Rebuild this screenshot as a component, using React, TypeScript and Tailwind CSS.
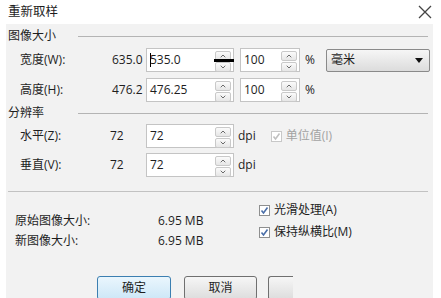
import { ChevronDown, ChevronUp } from 'lucide-react'

const font = { fontFamily: '"Segoe UI", "Open Sans", "Noto Sans CJK SC", sans-serif' }

function Spinner({ mark }: { mark?: boolean }) {
  return (
    <div className="relative flex h-full w-[18px] flex-col gap-[1px] py-[2px] pr-[2px]">
      <div className="flex flex-1 items-center justify-center rounded-[2px] border border-[#c9c9c9] bg-gradient-to-b from-[#fbfbfb] to-[#e6e6e6]">
        <ChevronUp size={8} strokeWidth={3} className="text-[#6a6a6a]" />
      </div>
      <div className="flex flex-1 items-center justify-center rounded-[2px] border border-[#c9c9c9] bg-gradient-to-b from-[#fbfbfb] to-[#e6e6e6]">
        <ChevronDown size={8} strokeWidth={3} className="text-[#6a6a6a]" />
      </div>
      {mark && <div className="absolute top-[10px] left-[-1px] h-[3px] w-[20px] bg-black" />}
    </div>
  )
}

function NumBox({ value, w, cursor, mark }: { value: string; w: string; cursor?: boolean; mark?: boolean }) {
  return (
    <div className={`flex h-[24px] items-stretch border border-[#c4c4c4] bg-white ${w}`}>
      <div className="flex flex-1 items-center pl-[3px]">
        {cursor && <span className="mr-[-1px] h-[14px] w-[1px] bg-black" />}
        <span>{value}</span>
      </div>
      <Spinner mark={mark} />
    </div>
  )
}

function Check({ label, disabled }: { label: string; disabled?: boolean }) {
  return (
    <div className={`flex items-center gap-[4px] ${disabled ? 'text-[#a3a3a3]' : ''}`}>
      <span
        className={`flex h-[11px] w-[11px] items-center justify-center border bg-white ${
          disabled ? 'border-[#c8c8c8]' : 'border-[#8e8f8f]'
        }`}
      >
        <svg width="9" height="9" viewBox="0 0 9 9">
          <path
            d="M1.5 4.5 L3.5 7 L7.5 1.5"
            fill="none"
            stroke={disabled ? '#c0c0c0' : '#4a6ea8'}
            strokeWidth="1.6"
          />
        </svg>
      </span>
      <span>{label}</span>
    </div>
  )
}

function GroupHead({ title }: { title: string }) {
  return (
    <div className="flex h-[22px] items-center">
      <span className="w-[72px] pl-[2px]">{title}</span>
      <div className="mr-[5px] h-[1px] flex-1 bg-[#b4b4b4]" />
    </div>
  )
}

export default function App() {
  return (
    <div
      className="flex h-[298px] w-[441px] flex-col overflow-hidden bg-white text-[12px] leading-[16px] text-[#1e1e1e]"
      style={font}
    >
      <div className="flex h-[24px] shrink-0 items-center justify-between pr-[9px] pl-[8px]">
        <span className="text-[12.5px]">重新取样</span>
        <svg width="14" height="14" viewBox="0 0 14 14">
          <path d="M1 1 L13 13 M13 1 L1 13" stroke="#444" strokeWidth="1.3" />
        </svg>
      </div>

      <div className="ml-[6px] w-[427px] flex-1 bg-[#f2f2f2]">
        <div className="pt-[1px]">
          <GroupHead title="图像大小" />
        </div>

        <div className="mt-[1px] flex h-[24px] items-center">
          <span className="w-[106px] pl-[14px]">宽度(W):</span>
          <span className="w-[34px]">635.0</span>
          <NumBox value="535.0" w="w-[88px]" cursor mark />
          <div className="ml-[6px]">
            <NumBox value="100" w="w-[60px]" />
          </div>
          <span className="ml-[5px]">%</span>
          <div className="ml-[11px] flex h-[23px] w-[104px] items-center justify-between rounded-[2px] border border-[#8a8a8a] bg-gradient-to-b from-[#f6f6f6] to-[#dcdcdc] pr-[6px] pl-[4px]">
            <span>毫米</span>
            <svg width="8" height="5" viewBox="0 0 8 5">
              <path d="M0 0 L8 0 L4 5 Z" fill="#111" />
            </svg>
          </div>
        </div>

        <div className="mt-[6px] flex h-[24px] items-center">
          <span className="w-[106px] pl-[14px]">高度(H):</span>
          <span className="w-[34px]">476.2</span>
          <NumBox value="476.25" w="w-[88px]" />
          <div className="ml-[6px]">
            <NumBox value="100" w="w-[60px]" />
          </div>
          <span className="ml-[5px]">%</span>
        </div>

        <GroupHead title="分辨率" />

        <div className="flex h-[24px] items-center">
          <span className="w-[104px] pl-[14px]">水平(Z):</span>
          <span className="w-[36px]">72</span>
          <NumBox value="72" w="w-[88px]" />
          <span className="ml-[4px]">dpi</span>
          <div className="ml-[15px]">
            <Check label="单位值(I)" disabled />
          </div>
        </div>

        <div className="mt-[5px] flex h-[24px] items-center">
          <span className="w-[104px] pl-[14px]">垂直(V):</span>
          <span className="w-[36px]">72</span>
          <NumBox value="72" w="w-[88px]" />
          <span className="ml-[4px]">dpi</span>
        </div>

        <div className="mt-[14px] mr-[5px] ml-[2px] h-[1px] bg-[#c2c2c2]" />

        <div className="flex">
          <div className="mt-[21px] flex w-[253px] flex-col gap-[4px] pl-[9px]">
            <div className="flex">
              <span className="w-[143px]">原始图像大小:</span>
              <span>6.95 MB</span>
            </div>
            <div className="flex">
              <span className="w-[143px]">新图像大小:</span>
              <span>6.95 MB</span>
            </div>
          </div>
          <div className="mt-[10px] flex flex-col gap-[6px]">
            <Check label="光滑处理(A)" />
            <Check label="保持纵横比(M)" />
          </div>
        </div>

        <div className="mt-[27px] flex pl-[91px]">
          <div className="flex h-[24px] w-[74px] items-center justify-center rounded-[3px] border border-[#3c7fb1] bg-gradient-to-b from-[#eaf6fd] to-[#cde7f7]">
            确定
          </div>
          <div className="ml-[13px] flex h-[24px] w-[73px] items-center justify-center rounded-[3px] border border-[#707070] bg-gradient-to-b from-[#f6f6f6] to-[#dddddd]">
            取消
          </div>
          <div className="ml-[11px] h-[24px] w-[25px] rounded-l-[3px] border-y border-l border-[#707070] bg-gradient-to-b from-[#f6f6f6] to-[#dddddd]" />
        </div>
      </div>
    </div>
  )
}
